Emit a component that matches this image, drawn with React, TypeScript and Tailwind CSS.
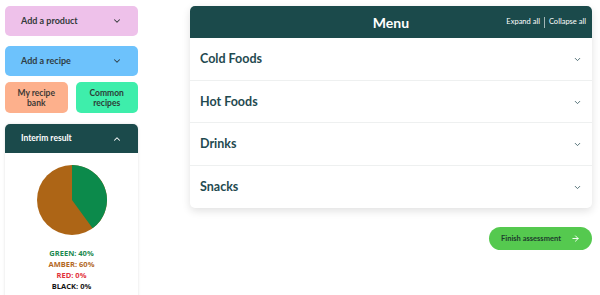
import { ChevronDown, ChevronUp, ArrowRight } from "lucide-react"

const sections = ["Cold Foods", "Hot Foods", "Drinks", "Snacks"]

function PieChart({ green }: { green: number }) {
  const r = 35
  const a = (green / 100) * Math.PI * 2
  const x = 36 + r * Math.sin(a)
  const y = 36 - r * Math.cos(a)
  const large = green > 50 ? 1 : 0
  return (
    <svg width="72" height="72" viewBox="0 0 72 72">
      <circle cx="36" cy="36" r={r} fill="#ad6516" />
      <path d={`M36 36 L36 1 A${r} ${r} 0 ${large} 1 ${x} ${y} Z`} fill="#0c8a4b" />
    </svg>
  )
}

export default function App() {
  return (
    <div
      className="flex h-[295px] w-[600px] gap-[52px] overflow-hidden bg-white pl-[5px] pt-[6px]"
      style={{ fontFamily: "Lato, 'Open Sans', sans-serif" }}
    >
      {/* sidebar */}
      <div className="flex w-[133px] shrink-0 flex-col">
        <button className="flex h-[30px] shrink-0 items-center justify-between rounded-[5px] bg-[#eec1ea] pl-4 pr-4 text-[9px] font-bold text-[#333a3a]">
          Add a product
          <ChevronDown className="size-[10px]" strokeWidth={2.5} />
        </button>
        <button className="mt-[10px] flex h-[30px] shrink-0 items-center justify-between rounded-[5px] bg-[#6dc2fc] pl-4 pr-4 text-[9px] font-bold text-[#2f3d45]">
          Add a recipe
          <ChevronDown className="size-[10px]" strokeWidth={2.5} />
        </button>
        <div className="mt-[6px] grid shrink-0 grid-cols-2 gap-2">
          <button className="h-[31px] rounded-[5px] bg-[#fdb08c] text-[8.5px] leading-[10px] font-bold text-[#3d3a36]">
            My recipe
            <br />
            bank
          </button>
          <button className="h-[31px] rounded-[5px] bg-[#3eeeab] text-[8.5px] leading-[10px] font-bold text-[#2c3d37]">
            Common
            <br />
            recipes
          </button>
        </div>
        <div className="mt-[11px] flex shrink-0 flex-col rounded-t-[5px] bg-white pb-6 shadow-[0_0_3px_rgba(0,0,0,0.12)]">
          <div className="flex h-[29px] items-center justify-between rounded-t-[5px] bg-[#1b4a4b] pl-4 pr-4 text-[8.5px] font-bold text-white">
            Interim result
            <ChevronUp className="size-[10px]" strokeWidth={2.5} />
          </div>
          <div className="mt-[11px] flex justify-center">
            <PieChart green={40} />
          </div>
          <div
            className="mt-[12px] flex flex-col items-center gap-[1px] text-[7.5px] leading-[10px] font-bold"
            style={{ fontFamily: "'Open Sans', sans-serif" }}
          >
            <span className="text-[#1c8a50]">GREEN: 40%</span>
            <span className="text-[#b3691f]">AMBER: 60%</span>
            <span className="text-[#e2323a]">RED: 0%</span>
            <span className="text-[#151515]">BLACK: 0%</span>
          </div>
        </div>
      </div>

      {/* main */}
      <div className="flex w-[402px] shrink-0 flex-col">
        <div className="shrink-0 rounded-[5px] bg-white shadow-[0_3px_8px_rgba(0,0,0,0.12)]">
          <div className="relative flex h-[32px] items-center justify-center rounded-t-[5px] bg-[#1b4a4b]">
            <span className="text-[14px] font-bold text-white">Menu</span>
            <div className="absolute right-[6px] flex items-center gap-[4px] text-[7.5px] text-white">
              <span>Expand all</span>
              <span className="h-[11px] w-px bg-white/60" />
              <span>Collapse all</span>
            </div>
          </div>
          {sections.map((s, i) => (
            <div
              key={s}
              className={
                "flex h-[42.5px] items-center justify-between pl-[10px] pr-[10px] pt-[2px] " +
                (i < sections.length - 1 ? "border-b border-[#eef0f0]" : "")
              }
            >
              <span className="text-[12.5px] font-bold text-[#1f4a50]">{s}</span>
              <ChevronDown className="size-[9px] text-[#4b6a70]" strokeWidth={2.5} />
            </div>
          ))}
        </div>
        <div className="mt-[19px] flex justify-end">
          <button className="flex h-[23px] w-[103px] items-center justify-center gap-[10px] rounded-full bg-[#55c94f] text-[7.5px] font-bold text-[#1d3b2d]">
            Finish assessment
            <ArrowRight className="size-[9px] text-white" strokeWidth={2.5} />
          </button>
        </div>
      </div>
    </div>
  )
}
